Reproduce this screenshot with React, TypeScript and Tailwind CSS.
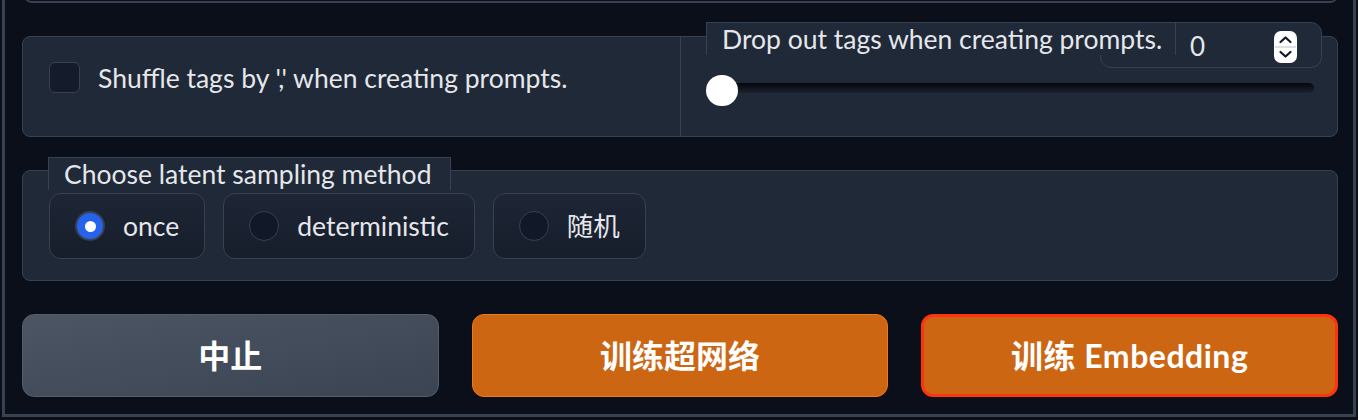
import React from "react";

const options = [
  { label: "once", checked: true },
  { label: "deterministic", checked: false },
  { label: "随机", checked: false },
];

function Spinner() {
  return (
    <svg width="23" height="32" viewBox="0 0 23 32">
      <rect x="0" y="0" width="23" height="32" rx="7" fill="#ffffff" />
      <line x1="1" y1="16" x2="22" y2="16" stroke="#d1d5db" strokeWidth="1.5" />
      <path d="M6.5 11 L11.5 6.5 L16.5 11" fill="none" stroke="#111827" strokeWidth="2.2" strokeLinecap="round" strokeLinejoin="round" />
      <path d="M6.5 21 L11.5 25.5 L16.5 21" fill="none" stroke="#111827" strokeWidth="2.2" strokeLinecap="round" strokeLinejoin="round" />
    </svg>
  );
}

export default function App() {
  return (
    <div className="h-[420px] w-[1358px] overflow-hidden bg-[#0b0f19] px-[2px] font-['Lato','Noto_Sans_CJK_SC',sans-serif] text-[#e5e7eb]">
      <div className="h-[417px] border-x-[3px] border-b-[3px] border-[#374151] pl-[17px] pr-[15px]">
        {/* bottom edge of the block above */}
        <div className="h-[3px] overflow-hidden">
          <div className="-mt-[20px] ml-[2px] h-[23px] rounded-b-lg border-x border-b-2 border-[#374151]" />
        </div>

        {/* tags row */}
        <div className="mt-[33px] flex h-[101px] rounded-lg border border-[#374151] bg-[#1f2937]">
          <div className="flex w-[658px] items-start gap-[18px] border-r border-[#374151] pl-[26px] pt-[25px]">
            <span className="h-[31px] w-[31px] shrink-0 rounded-md border border-[#374151] bg-[#141b2a]" />
            <span className="text-[26.5px] leading-[32px]">Shuffle tags by ',' when creating prompts.</span>
          </div>
          <div className="flex-1 pl-[25px]">
            <div className="-mt-[15px] flex">
              <div className="relative z-10 h-[33px] w-[470px] shrink-0 border-x border-t border-[#374151] bg-[#1f2937] pl-[15px] text-[26.5px] leading-[32px]">
                Drop out tags when creating prompts.
              </div>
              <div className="-ml-[76px] flex h-[46px] w-[222px] shrink-0 items-start justify-between rounded-[11px] border border-[#374151] bg-[#1f2937] pl-[89px] pr-[24px] pt-[8px]">
                <span className="text-[26px] leading-[31px]">0</span>
                <Spinner />
              </div>
            </div>
            <div className="relative mt-[6px] flex h-[32px] w-[608px] items-center">
              <div className="mt-[-4px] h-[10px] w-full rounded-full bg-gradient-to-b from-[#05070c] to-[#1b2331]" />
              <div className="absolute left-0 top-[1px] h-[31px] w-[32px] rounded-full bg-white" />
            </div>
          </div>
        </div>

        {/* latent sampling */}
        <div className="mt-[33px] flex flex-col rounded-lg border border-[#374151] bg-[#1f2937] px-[25px] pb-[21px]">
          <div className="-mt-[14px] h-[33px] w-[403px] border-x border-t border-[#374151] bg-[#1f2937] pl-[15px] text-[26.5px] leading-[32px]">
            Choose latent sampling method
          </div>
          <div className="mt-[3px] flex gap-[18px] pl-[1px]">
            {options.map((o) => (
              <div
                key={o.label}
                className="flex h-[66px] items-center gap-[18px] rounded-xl border border-[#374151] bg-gradient-to-b from-[#1e2635] to-[#161d2b] pl-[25px] pr-[25px]"
              >
                {o.checked ? (
                  <span className="flex h-[30px] w-[30px] items-center justify-center rounded-full border-2 border-[#374151] bg-[#2563eb]">
                    <span className="h-[11px] w-[11px] rounded-full bg-white" />
                  </span>
                ) : (
                  <span className="h-[30px] w-[30px] rounded-full border border-[#374151] bg-[#111827]" />
                )}
                <span className="text-[26.5px] leading-[30px]">{o.label}</span>
              </div>
            ))}
          </div>
        </div>

        {/* actions */}
        <div className="mt-[33px] grid grid-cols-3 gap-[33px]">
          <button className="h-[83px] rounded-xl border border-[#545d6b] bg-gradient-to-br from-[#4b5563] to-[#3b4453] text-[32px] font-bold text-white">
            中止
          </button>
          <button className="h-[83px] rounded-xl border-[1.5px] border-[#f07a1a] bg-[#cd6613] text-[32px] font-bold text-white">
            训练超网络
          </button>
          <button className="h-[83px] rounded-xl border-[3px] border-[#ff3312] bg-[#cd6613] text-[32px] font-bold tracking-[0.5px] text-white">
            训练 Embedding
          </button>
        </div>
      </div>
    </div>
  );
}
